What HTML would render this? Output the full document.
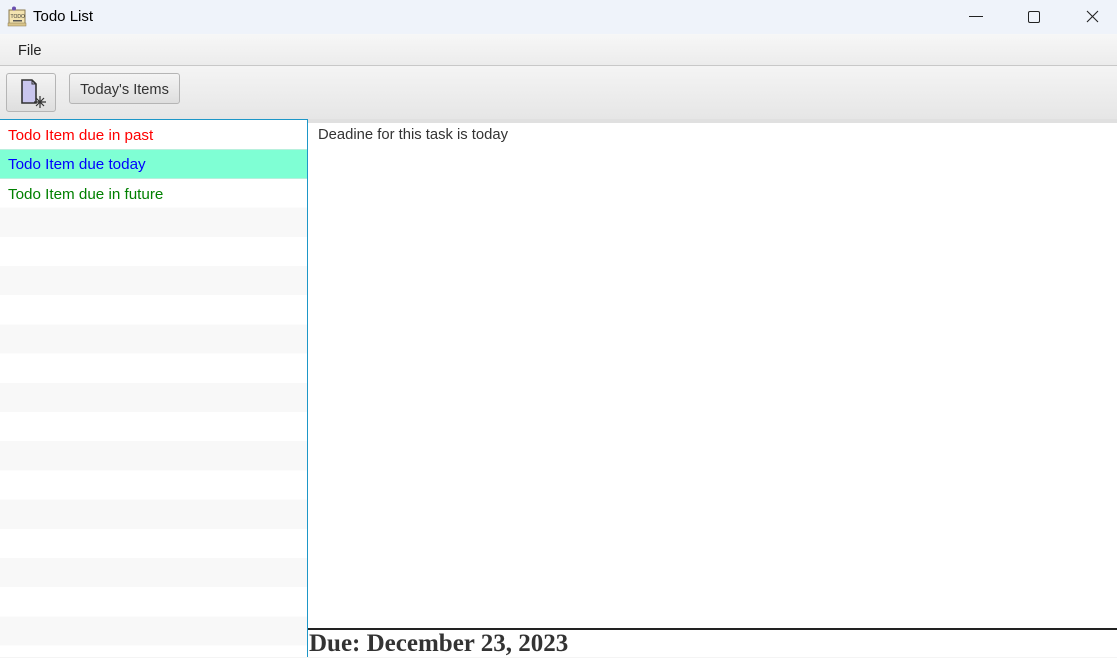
<!DOCTYPE html>
<html><head><meta charset="utf-8">
<style>
*{margin:0;padding:0;box-sizing:border-box}
body{width:1117px;height:657px;overflow:hidden;background:#f4f4f4;font-family:"Liberation Sans",sans-serif;position:relative}
.abs{position:absolute}
#title{left:0;top:0;width:1117px;height:34px;background:#eff3fa}
#menu{left:0;top:34px;width:1117px;height:32px;background:linear-gradient(#f7f7f7,#ececec);border-bottom:1px solid #c8c8c8}
#tool{left:0;top:67px;width:1117px;height:52px;background:linear-gradient(#f4f4f4,#e6e6e6)}
.btn{border:1px solid #b5b5b5;border-radius:3px;background:linear-gradient(#f4f4f4,#dedede)}
#list{left:0;top:119px;width:308px;height:538px;border-top:1px solid #1d97c8;border-right:1px solid #1d97c8;
background:repeating-linear-gradient(#fff 0,#fff 29.2px,#f8f8f8 29.2px,#f8f8f8 58.4px);background-color:#fff}
.row{position:absolute;left:8px;font-size:15.2px;height:29px;line-height:31px}
#detail{left:308px;top:119px;width:809px;height:511px;background:#fff;border-top:4px solid #e0e0e0;border-bottom:2px solid #222}
</style></head><body>
<div id="title" class="abs">
  <svg class="abs" style="left:6px;top:5px" width="22" height="23" viewBox="0 0 22 23">
    <rect x="3" y="5" width="16" height="14" fill="#f3e3b0" stroke="#8a7a50"/>
    <circle cx="8" cy="3.5" r="2" fill="#6a4fb0"/>
    <text x="4.5" y="13" font-size="5" font-family="Liberation Sans" fill="#333">TODO</text>
    <rect x="7" y="15" width="9" height="1.5" fill="#555"/>
    <rect x="2" y="18" width="18" height="3" fill="#d9c48a" stroke="#8a7a50" stroke-width=".5"/>
  </svg>
  <div class="abs" style="left:33px;top:8px;font-size:15px;color:#000">Todo List</div>
  <svg class="abs" style="left:967px;top:8px" width="140" height="18">
    <path d="M2 8.5H16" stroke="#222" stroke-width="1"/>
    <rect x="61.5" y="3.5" width="11" height="11" rx="1.5" fill="none" stroke="#222"/>
    <path d="M120 3L131 14M131 3L120 14" stroke="#222" stroke-width="1.1"/>
  </svg>
</div>
<div id="menu" class="abs"><div class="abs" style="left:18px;top:9px;font-size:14.6px;color:#222">File</div></div>
<div id="tool" class="abs">
  <div class="abs btn" style="left:6px;top:6px;width:50px;height:39px">
    <svg class="abs" style="left:13px;top:5px" width="28" height="30" viewBox="0 0 28 30">
      <path d="M2 1H12L16 5V24H2Z" fill="#c9c6ee" stroke="#333" stroke-width="1.6"/>
      <path d="M12 1V5H16" fill="none" stroke="#333"/>
      <path d="M20 17V29M14 23H26M16 19L24 27M24 19L16 27" stroke="#333" stroke-width="1.2"/>
    </svg>
  </div>
  <div class="abs btn" style="left:69px;top:6px;width:111px;height:31px;font-size:14.6px;color:#333;text-align:center;line-height:32px">Today's Items</div>
</div>
<div id="list" class="abs">
  <div class="abs" style="left:0;top:29px;width:307px;height:30px;background:#7fffd4;border-top:1px solid #b8f0dd;border-bottom:1px solid #b8f0dd"></div>
  <div class="row" style="top:0;color:#ff0000">Todo Item due in past</div>
  <div class="row" style="top:29px;color:#0000ff">Todo Item due today</div>
  <div class="row" style="top:59px;color:#008000">Todo Item due in future</div>
</div>
<div id="detail" class="abs"><div class="abs" style="left:10px;top:4px;font-size:14.8px;color:#333">Deadine for this task is today</div></div>
<div class="abs" style="left:308px;top:630px;width:809px;height:27px;background:#fff"></div>
<div class="abs" style="left:309px;top:630px;font-family:'Liberation Serif',serif;font-weight:bold;font-size:25px;color:#333">Due: December 23, 2023</div>
</body></html>
